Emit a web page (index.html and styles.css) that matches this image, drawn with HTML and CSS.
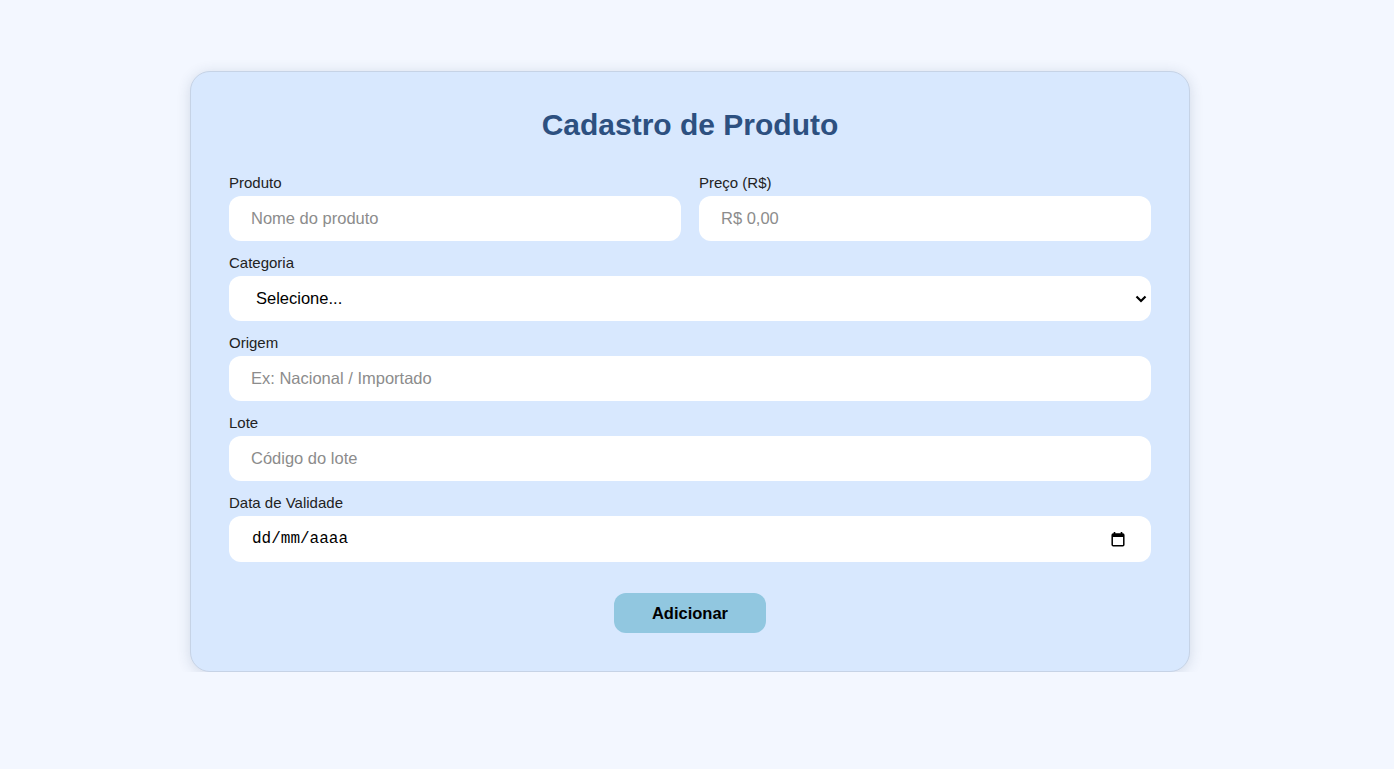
FILE: index.html
```
<!DOCTYPE html>
<html lang="pt-BR">
<head>
<meta charset="utf-8">
<title>Cadastro de Produto</title>
<link rel="stylesheet" href="styles.css">
</head>
<body>
<div class="page">
  <form class="card">
    <h1 class="title">Cadastro de Produto</h1>
    <div class="row">
      <div class="field">
        <label class="label" for="produto">Produto</label>
        <input class="control" id="produto" type="text" placeholder="Nome do produto">
      </div>
      <div class="field">
        <label class="label" for="preco">Preço (R$)</label>
        <input class="control" id="preco" type="text" placeholder="R$ 0,00">
      </div>
    </div>
    <div class="field">
      <label class="label" for="categoria">Categoria</label>
      <div class="select-wrap">
        <select class="control select" id="categoria">
          <option>Selecione...</option>
        </select>
        <svg class="chevron" width="12" height="8" viewBox="0 0 12 8"><path d="M1.5 1.5 L6 6 L10.5 1.5" fill="none" stroke="#000" stroke-width="2.2"/></svg>
      </div>
    </div>
    <div class="field">
      <label class="label" for="origem">Origem</label>
      <input class="control" id="origem" type="text" placeholder="Ex: Nacional / Importado">
    </div>
    <div class="field">
      <label class="label" for="lote">Lote</label>
      <input class="control" id="lote" type="text" placeholder="Código do lote">
    </div>
    <div class="field">
      <label class="label" for="validade">Data de Validade</label>
      <div class="control date">
        <span class="date-text" id="validade">dd/mm/aaaa</span>
        <svg class="cal" width="14" height="16" viewBox="0 0 14 16"><path d="M3.5 1 V3.5 M10.5 1 V3.5" stroke="#000" stroke-width="1.6"/><rect x="1.2" y="3" width="11.6" height="11.8" rx="1" fill="none" stroke="#000" stroke-width="1.5"/><rect x="1.2" y="3" width="11.6" height="3" fill="#000"/></svg>
      </div>
    </div>
    <div class="actions">
      <button class="btn" type="button">Adicionar</button>
    </div>
  </form>
</div>
</body>
</html>
```
FILE: styles.css
```
* { box-sizing: border-box; }
html, body { margin: 0; padding: 0; }
body {
  background: #f3f7ff;
  font-family: "Liberation Sans", Arial, sans-serif;
  color: #222;
}
.page {
  display: flex;
  justify-content: center;
  padding: 71px 14px 0 0;
}
.card {
  width: 1000px;
  background: #d8e8fe;
  border: 1px solid #c6d3e6;
  border-radius: 20px;
  box-shadow: 0 2px 14px rgba(40, 60, 100, 0.16);
  padding: 36px 38px 38px;
}
.title {
  margin: 0 0 32px;
  text-align: center;
  font-size: 30px;
  line-height: 34px;
  font-weight: 700;
  color: #2d5080;
}
.row {
  display: grid;
  grid-template-columns: 1fr 1fr;
  column-gap: 18px;
}
.field {
  display: flex;
  flex-direction: column;
  margin-bottom: 13px;
}
.label {
  display: block;
  font-size: 15px;
  line-height: 17px;
  margin-bottom: 5px;
  color: #222;
}
.control {
  display: block;
  width: 100%;
  height: 45px;
  border: none;
  border-radius: 12px;
  background: #fff;
  padding: 0 22px;
  font-family: "Liberation Sans", Arial, sans-serif;
  font-size: 16.5px;
  color: #000;
  outline: none;
}
.control::placeholder { color: #8c8c8c; }
.select-wrap { position: relative; height: 45px; }
.select {
  appearance: none;
  -webkit-appearance: none;
  padding-left: 27px;
  padding-bottom: 2px;
}
.chevron {
  position: absolute;
  right: 4px;
  top: 19px;
  pointer-events: none;
}
.date {
  display: flex;
  align-items: center;
  justify-content: space-between;
  height: 46px;
  padding: 0 26px 0 23px;
}
.date-text {
  font-family: "Liberation Mono", "DejaVu Sans Mono", monospace;
  font-size: 16px;
  color: #000;
}
.actions {
  display: flex;
  justify-content: center;
  margin-top: 31px;
}
.btn {
  height: 40px;
  width: 152px;
  border: none;
  border-radius: 12px;
  background: #91c7e0;
  font-family: "Liberation Sans", Arial, sans-serif;
  font-size: 16.5px;
  font-weight: 700;
  color: #000;
}
```
